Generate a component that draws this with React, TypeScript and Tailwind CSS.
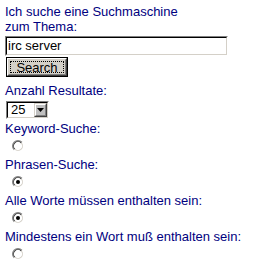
export default function App() {
  const options: [string, boolean][] = [
    ["Keyword-Suche:", false],
    ["Phrasen-Suche:", true],
    ["Alle Worte müssen enthalten sein:", true],
    ["Mindestens ein Wort muß enthalten sein:", false],
  ];

  return (
    <div className="min-h-[261px] bg-white pl-[5px] pt-[4px] font-['Liberation_Sans',Arial,sans-serif] text-[13px] leading-[15px] text-[#000080]">
      {/* Suchbegriff */}
      <div>
        Ich suche eine Suchmaschine
        <br />
        zum Thema:
      </div>
      <div className="mt-[2px] w-[223px] h-[20px] border border-t-[#808080] border-l-[#808080] border-b-white border-r-white">
        <div className="h-full border border-t-black border-l-black border-b-[#d4d0c8] border-r-[#d4d0c8] bg-white pl-[1px] text-black leading-[16px]">
          irc server
        </div>
      </div>

      {/* Button */}
      <div className="mt-[1px] ml-[1px] w-[62px] h-[20px] border border-black">
        <div className="h-full border border-t-white border-l-white border-b-[#404040] border-r-[#404040] bg-[#d4d0c8]">
          <div className="h-full border border-t-[#d4d0c8] border-l-[#d4d0c8] border-b-[#808080] border-r-[#808080] p-[1px]">
            <div className="h-full border border-dotted border-black flex items-center justify-center text-black">
              Search
            </div>
          </div>
        </div>
      </div>

      {/* Anzahl */}
      <div className="mt-[6px]">Anzahl Resultate:</div>
      <div className="mt-[3px] ml-[1px] flex w-[43px] h-[18px] border border-t-[#808080] border-l-[#808080] border-b-white border-r-white">
        <div className="flex flex-1 border border-t-black border-l-black border-b-[#d4d0c8] border-r-[#d4d0c8] bg-white">
          <div className="flex-1 pl-[3px] text-black leading-[14px]">25</div>
          <div className="w-[13px] h-full border border-t-[#d4d0c8] border-l-[#d4d0c8] border-b-[#404040] border-r-[#404040]">
            <div className="h-full flex items-center justify-center bg-[#c0c0c0] border border-t-white border-l-white border-b-[#808080] border-r-[#808080]">
              <svg width="7" height="4" viewBox="0 0 7 4">
                <path d="M0 0h7L3.5 4z" fill="#000000" />
              </svg>
            </div>
          </div>
        </div>
      </div>

      {/* Optionen */}
      {options.map(([label, checked], i) => (
        <div key={i} className={i === 0 ? "mt-[2px]" : ""}>
          <div>{label}</div>
          <div className="h-[21px] pl-[7px] pt-[4px]">
            <svg width="12" height="12" viewBox="0 0 12 12">
              <circle cx="6" cy="6" r="5.5" fill="none" stroke="#808080" strokeDasharray="17.3 17.3" transform="rotate(-225 6 6)" />
              <circle cx="6" cy="6" r="5.5" fill="none" stroke="#ffffff" strokeDasharray="17.3 17.3" transform="rotate(-45 6 6)" />
              <circle cx="6" cy="6" r="4.5" fill="#ffffff" stroke="none" />
              <circle cx="6" cy="6" r="4.5" fill="none" stroke="#404040" strokeDasharray="14.1 14.1" transform="rotate(-225 6 6)" />
              <circle cx="6" cy="6" r="4.5" fill="none" stroke="#d4d0c8" strokeDasharray="14.1 14.1" transform="rotate(-45 6 6)" />
              {checked && <circle cx="6" cy="6" r="2" fill="#000000" />}
            </svg>
          </div>
        </div>
      ))}
    </div>
  );
}
